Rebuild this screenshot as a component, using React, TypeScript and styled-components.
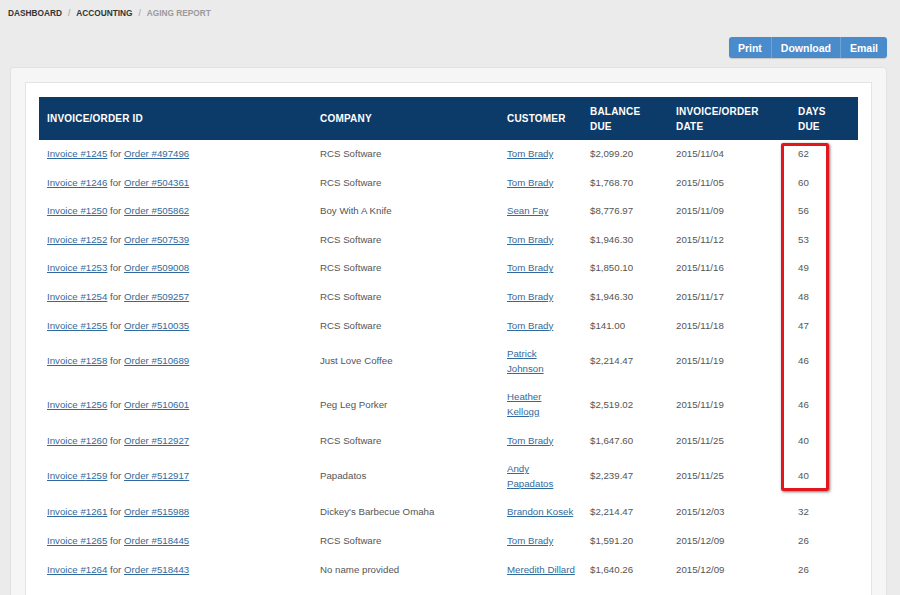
import React, { ReactElement } from 'react';
import styled, { createGlobalStyle } from 'styled-components';

const GlobalStyle = createGlobalStyle`
  body {
    margin: 0;
    background: #ebebeb;
    font-family: 'Liberation Sans', Arial, sans-serif;
  }
`;

const Page = styled.div`
  padding: 8px 13px 0 10px;
`;

const Breadcrumb = styled.div`
  display: flex;
  gap: 6px;
  margin-left: -2px;
  font-size: 8.3px;
  line-height: 10px;
  font-weight: 700;
  text-transform: uppercase;
`;

const Crumb = styled.span<{ $current?: boolean }>`
  color: ${(p) => (p.$current ? '#9a9a9a' : '#333')};
`;

const Sep = styled.span`
  color: #9a9a9a;
  font-weight: 400;
`;

const Toolbar = styled.div`
  display: flex;
  justify-content: flex-end;
  margin-top: 19px;
`;

const ButtonGroup = styled.div`
  display: flex;
  height: 21px;
  border-radius: 3px;
  overflow: hidden;
  background: #4a8ccb;
  box-shadow: 0 1px 1px rgba(0, 0, 0, 0.15);
`;

const GroupButton = styled.button`
  border: 0;
  border-left: 1px solid #6ea3d6;
  background: transparent;
  color: #fff;
  font-family: inherit;
  font-size: 10.5px;
  font-weight: 700;
  padding: 0 9px;
  cursor: pointer;
  &:first-child {
    border-left: 0;
  }
`;

const Panel = styled.div`
  margin-top: 9px;
  background: #f6f6f6;
  border: 1px solid #e2e2e2;
  border-radius: 3px;
  padding: 14px 14px 0;
`;

const Card = styled.div`
  background: #fff;
  border: 1px solid #e4e4e4;
  padding: 14px 13px;
`;

const TableWrap = styled.div`
  position: relative;
`;

const Table = styled.table`
  width: 100%;
  border-collapse: collapse;
  table-layout: fixed;
  font-size: 9.7px;
  color: #555;
`;

const Th = styled.th<{ $width: number; $padRight?: number }>`
  box-sizing: border-box;
  width: ${(p) => p.$width}px;
  background: #0c3b69;
  color: #fff;
  font-size: 10px;
  font-weight: 700;
  text-align: left;
  text-transform: uppercase;
  letter-spacing: 0.2px;
  line-height: 15px;
  padding: 6.5px ${(p) => p.$padRight ?? 8}px 6.5px 8px;
  vertical-align: middle;
`;

const Td = styled.td<{ $padRight?: number }>`
  line-height: 14.6px;
  padding: 7px ${(p) => p.$padRight ?? 8}px 7px 8px;
  vertical-align: middle;
`;

const Link = styled.a`
  color: #336a9c;
  text-decoration: underline;
`;

const Highlight = styled.div`
  position: absolute;
  left: 742px;
  top: 46px;
  width: 42px;
  height: 342px;
  border: 3px solid #e3161b;
  border-radius: 2px;
  box-shadow: 1px 1px 3px rgba(0, 0, 0, 0.55);
  pointer-events: none;
`;

type Row = {
  invoice: number;
  order: number;
  company: string;
  customer: string;
  balance: string;
  date: string;
  days: number;
};

const rows: Row[] = [
  { invoice: 1245, order: 497496, company: 'RCS Software', customer: 'Tom Brady', balance: '$2,099.20', date: '2015/11/04', days: 62 },
  { invoice: 1246, order: 504361, company: 'RCS Software', customer: 'Tom Brady', balance: '$1,768.70', date: '2015/11/05', days: 60 },
  { invoice: 1250, order: 505862, company: 'Boy With A Knife', customer: 'Sean Fay', balance: '$8,776.97', date: '2015/11/09', days: 56 },
  { invoice: 1252, order: 507539, company: 'RCS Software', customer: 'Tom Brady', balance: '$1,946.30', date: '2015/11/12', days: 53 },
  { invoice: 1253, order: 509008, company: 'RCS Software', customer: 'Tom Brady', balance: '$1,850.10', date: '2015/11/16', days: 49 },
  { invoice: 1254, order: 509257, company: 'RCS Software', customer: 'Tom Brady', balance: '$1,946.30', date: '2015/11/17', days: 48 },
  { invoice: 1255, order: 510035, company: 'RCS Software', customer: 'Tom Brady', balance: '$141.00', date: '2015/11/18', days: 47 },
  { invoice: 1258, order: 510689, company: 'Just Love Coffee', customer: 'Patrick Johnson', balance: '$2,214.47', date: '2015/11/19', days: 46 },
  { invoice: 1256, order: 510601, company: 'Peg Leg Porker', customer: 'Heather Kellogg', balance: '$2,519.02', date: '2015/11/19', days: 46 },
  { invoice: 1260, order: 512927, company: 'RCS Software', customer: 'Tom Brady', balance: '$1,647.60', date: '2015/11/25', days: 40 },
  { invoice: 1259, order: 512917, company: 'Papadatos', customer: 'Andy Papadatos', balance: '$2,239.47', date: '2015/11/25', days: 40 },
  { invoice: 1261, order: 515988, company: "Dickey's Barbecue Omaha", customer: 'Brandon Kosek', balance: '$2,214.47', date: '2015/12/03', days: 32 },
  { invoice: 1265, order: 518445, company: 'RCS Software', customer: 'Tom Brady', balance: '$1,591.20', date: '2015/12/09', days: 26 },
  { invoice: 1264, order: 518443, company: 'No name provided', customer: 'Meredith Dillard', balance: '$1,640.26', date: '2015/12/09', days: 26 },
];

const App = (): ReactElement => {
  return (
    <Page>
      <GlobalStyle />
      <Breadcrumb>
        <Crumb>Dashboard</Crumb>
        <Sep>/</Sep>
        <Crumb>Accounting</Crumb>
        <Sep>/</Sep>
        <Crumb $current>Aging Report</Crumb>
      </Breadcrumb>
      <Toolbar>
        <ButtonGroup>
          <GroupButton>Print</GroupButton>
          <GroupButton>Download</GroupButton>
          <GroupButton>Email</GroupButton>
        </ButtonGroup>
      </Toolbar>
      <Panel>
        <Card>
          <TableWrap>
            <Table>
              <thead>
                <tr>
                  <Th $width={273}>Invoice/Order ID</Th>
                  <Th $width={187}>Company</Th>
                  <Th $width={83}>Customer</Th>
                  <Th $width={86}>Balance Due</Th>
                  <Th $width={122}>Invoice/Order Date</Th>
                  <Th $width={68} $padRight={12}>Days Due</Th>
                </tr>
              </thead>
              <tbody>
                {rows.map((r) => (
                  <tr key={r.invoice}>
                    <Td>
                      <Link href="#">Invoice #{r.invoice}</Link> for{' '}
                      <Link href="#">Order #{r.order}</Link>
                    </Td>
                    <Td>{r.company}</Td>
                    <Td $padRight={6.5}>
                      <Link href="#">{r.customer}</Link>
                    </Td>
                    <Td>{r.balance}</Td>
                    <Td>{r.date}</Td>
                    <Td>{r.days}</Td>
                  </tr>
                ))}
              </tbody>
            </Table>
            <Highlight />
          </TableWrap>
        </Card>
      </Panel>
    </Page>
  );
};

export default App;
